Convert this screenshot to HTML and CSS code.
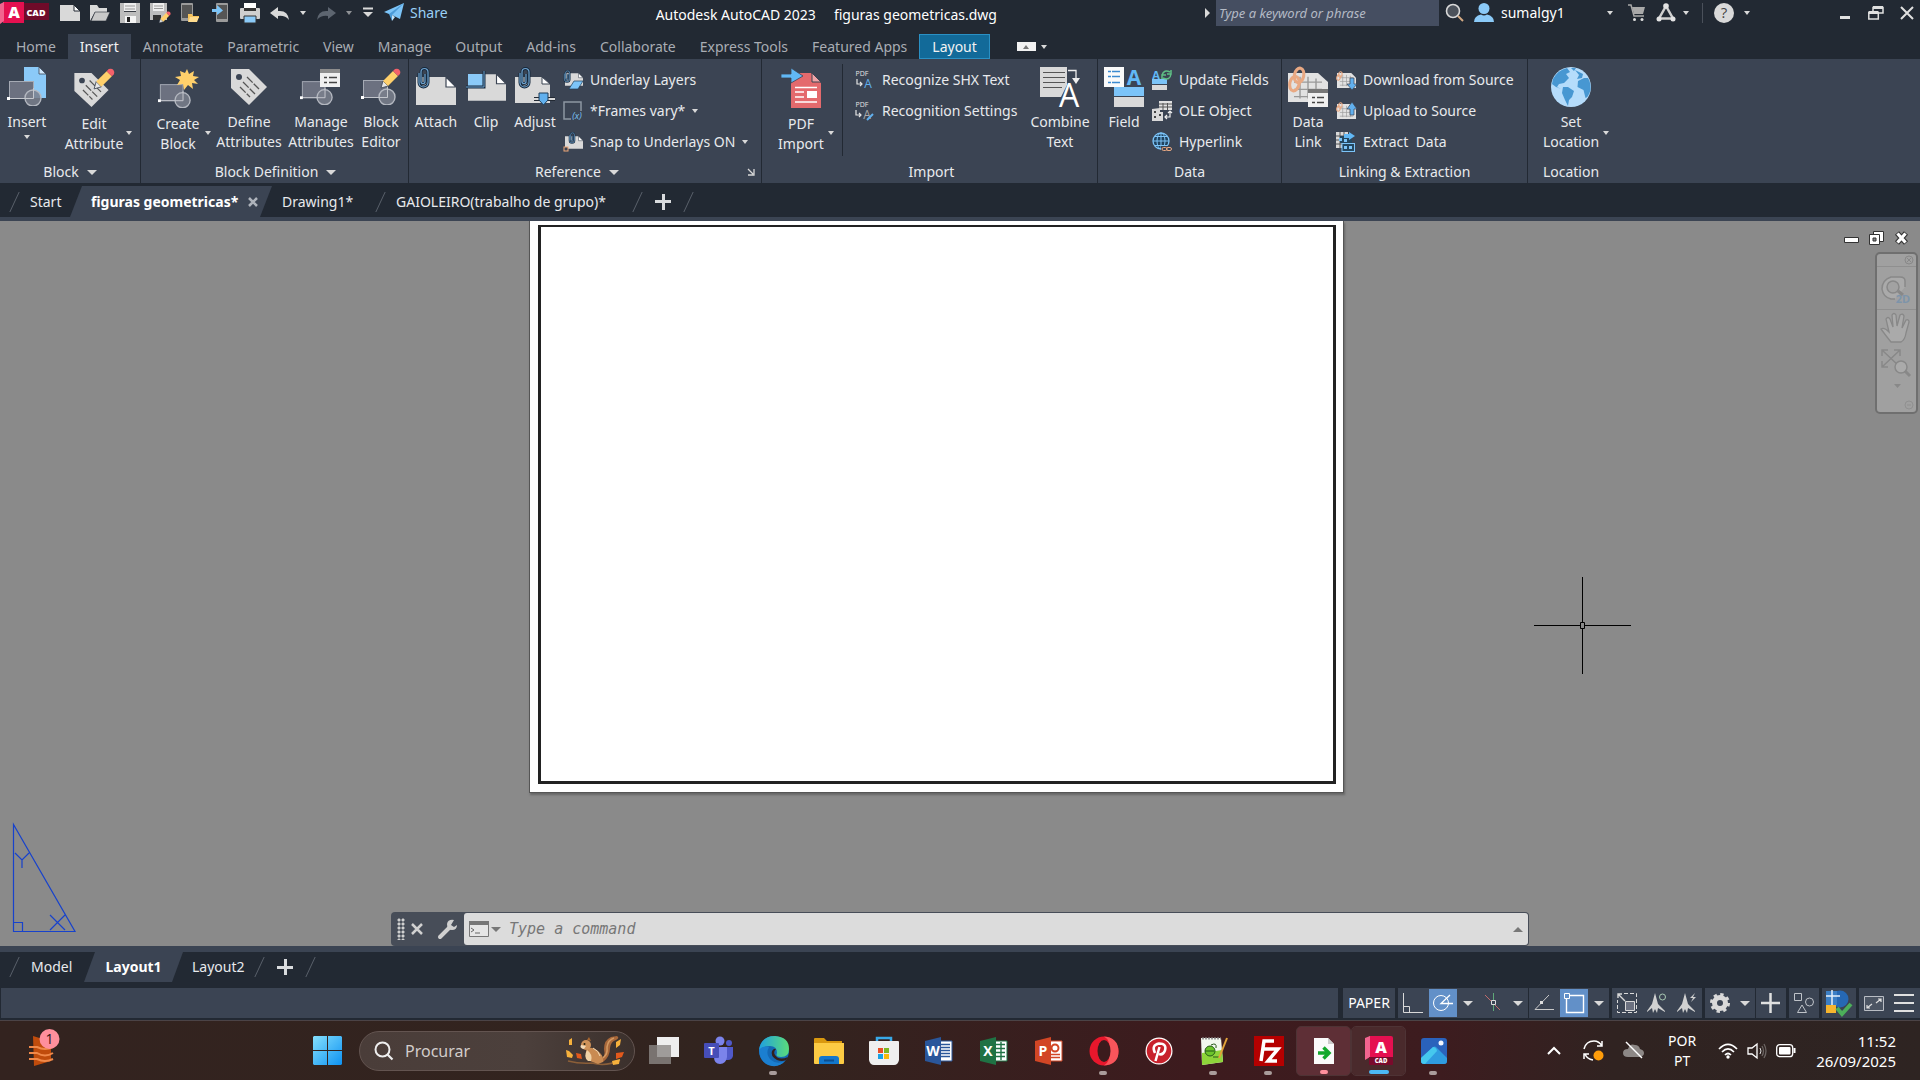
FILE: index.html
```
<!DOCTYPE html>
<html lang="en">
<head>
  <meta charset="UTF-8">
  <title>Autodesk AutoCAD 2023 - figuras geometricas.dwg</title>
  <meta name="viewport" content="width=device-width, initial-scale=1.0">
  <link rel="stylesheet" href="styles.css">
</head>
<body>

  <!-- shared shapes -->
  <svg class="defs" aria-hidden="true">
    <symbol id="clip" viewBox="0 0 12 22">
      <path d="M1.500 6v9.500a4.500 4.500 0 0 0 9 0V5a3.500 3.500 0 0 0-7 0v9.500a2 2 0 0 0 4 0V7" fill="none" stroke="#16293d" stroke-width="3"/>
      <path d="M1.500 6v9.500a4.500 4.500 0 0 0 9 0V5a3.500 3.500 0 0 0-7 0v9.500a2 2 0 0 0 4 0V7" fill="none" stroke="#6fa3cf" stroke-width="1.200"/>
    </symbol>
    <symbol id="block" viewBox="0 0 36 26">
      <rect x="2.500" y="1.500" width="24" height="17" fill="#6c7180" stroke="#a5aab4"/>
      <circle cx="26" cy="18" r="8" fill="#7a7f8c" fill-opacity=".85" stroke="#b4b8c0" stroke-width="1.400"/>
      <path d="M2 18.500h24.500V8" fill="none" stroke="#c3c6cc"/>
      <rect x="0" y="17" width="3" height="3" fill="#fff"/>
    </symbol>
    <symbol id="pencil" viewBox="0 0 22 22">
      <path d="M2 20l2-7 5 5z" fill="#e6e6e6" stroke="#3b4453" stroke-width=".8"/>
      <path d="M4 13L14 3l5 5L9 18z" fill="#ffd06b"/>
      <path d="M14 3l2-2q3-1 4.500 1T21 6l-2 2z" fill="#f4616a"/>
    </symbol>
    <symbol id="tag" viewBox="0 0 38 40">
      <path d="M1 2h18l18 18-18 18L1 21z" fill="#d9d9d9"/>
      <circle cx="9" cy="10" r="3" fill="#3b4453"/>
      <path d="M17 10l12 12M13 15l12 12M10 20l10 10" stroke="#555" stroke-width="1.300" stroke-dasharray="8 1.500"/>
    </symbol>
    <symbol id="sheet" viewBox="0 0 20 14">
      <path d="M0 0h15l5 5v9H0z" fill="#d9d9d9"/>
      <path d="M15 0v5h5z" fill="#fff" stroke="#3b4453" stroke-width=".6"/>
    </symbol>
    <symbol id="chain" viewBox="0 0 18 26">
      <g fill="none" stroke="#e9a983" stroke-width="3">
        <ellipse cx="11" cy="9" rx="4.500" ry="7" transform="rotate(12 11 9)"/>
        <ellipse cx="6.500" cy="17" rx="4.500" ry="7" transform="rotate(12 6.500 17)"/>
      </g>
    </symbol>
    <symbol id="grid" viewBox="0 0 20 16" preserveAspectRatio="none">
      <path d="M0 0h15l5 5v11H0z" fill="#e2e2e2"/>
      <path d="M3 5h14M3 9h14M3 13h14M6 2v12M10 2v12M14 3v11" stroke="#999" stroke-width=".7"/>
    </symbol>
  </svg>

  <header class="titlebar">
    <div class="quick">
      <button class="logo" aria-label="Application menu">
        <svg width="50" height="26" viewBox="0 0 50 26"><path d="M24 3h25v17H24z" fill="#6f0b29"/><path d="M3 2h21v21H3z" fill="#e51050"/><path d="M0 4l4-2v19l-4 3z" fill="#f2648f"/><text x="14" y="18" class="t-logo">A</text><text x="36" y="16" class="t-cad">CAD</text></svg>
      </button>
      <button aria-label="New"><svg width="20" height="20"><path d="M0 2h14l6 6v10H0z" fill="#d9d9d9"/><path d="M14 2l6 6h-6z" fill="#fff" stroke="#222933"/></svg></button>
      <button aria-label="Open"><svg width="20" height="20"><path d="M0 18V2h7l2 3h8v4H5z" fill="#d9d9d9"/><path d="M5 9h15l-4 9H1z" fill="#c9c9c9" stroke="#222933" stroke-width=".6"/></svg></button>
      <button aria-label="Save"><svg width="20" height="20"><path d="M0 0h20v20H0z" fill="#bdbdbd"/><path d="M4 0h12v9H4z" fill="#3b3f46"/><path d="M4 0h12v8H4z" fill="#eee"/><path d="M5 3h10M5 6h10" stroke="#999"/><path d="M5 13h11v7H5z" fill="#f4f4f4"/><path d="M7 14h3v5H7z" fill="#222"/></svg></button>
      <button aria-label="Save as"><svg width="20" height="20"><path d="M0 0h17v17H0z" fill="#bdbdbd"/><path d="M3 0h11v8H3z" fill="#eee"/><path d="M4 3h9M4 5.500h9" stroke="#999"/><path d="M3 12h8v5H3z" fill="#333"/><use href="#pencil" x="8" y="8" width="13" height="13"/></svg></button>
      <button aria-label="Open from mobile"><svg width="20" height="20"><rect x="1" width="12" height="18" rx="1" fill="#9b9b9b"/><path d="M2 2h10v13H2z" fill="#555"/><path d="M8 11h4l1 2h6v2h-9l-2 4z" fill="#f6c35c"/><path d="M10 14h9l-2 5H8z" fill="#ffdc8e"/></svg></button>
      <button aria-label="Save to mobile"><svg width="20" height="20"><rect x="6" width="12" height="19" rx="1" fill="#9b9b9b"/><path d="M7 2h10v14H7z" fill="#555"/><path d="M2 6h5V2l6 5.500L7 12V9H2z" fill="#7cc4f8"/></svg></button>
      <button aria-label="Plot"><svg width="20" height="20"><path d="M4 0h12v6H4z" fill="#fff"/><rect y="5" width="20" height="11" rx="1" fill="#cfcfcf"/><path d="M4 5h12v3H4z" fill="#333"/><path d="M4 13h12v7H4z" fill="#8bcaf8" stroke="#333"/></svg></button>
      <button aria-label="Undo"><svg width="20" height="20"><path d="M0 10l8-6v4q10-1 11 9-4-5-11-4v3z" fill="#d9d9d9"/></svg></button>
      <button class="drop" aria-label="Undo list"><i class="caret"></i></button>
      <button aria-label="Redo"><svg width="20" height="20"><path d="M20 10l-8-6v4q-10-1-11 9 4-5 11-4v3z" fill="#5d6570"/></svg></button>
      <button class="drop dim" aria-label="Redo list"><i class="caret"></i></button>
      <button aria-label="Customize"><svg width="12" height="12"><path d="M1 1.500h10" stroke="#d9d9d9" stroke-width="2"/><path d="M1 5h10l-5 5z" fill="#d9d9d9"/></svg></button>
      <button class="share"><svg width="20" height="20"><path d="M0 9L20 0l-4 16-6-3z" fill="#7cc4f8"/><path d="M5 11L20 0 8 12v6z" fill="#4b9bd8"/><path d="M8 18l3-4-3-2z" fill="#c5e5fb"/></svg>Share</button>
    </div>
    <h1><span>Autodesk AutoCAD 2023</span><span>figuras geometricas.dwg</span></h1>
    <div class="info">
      <i class="caret-right"></i>
      <input type="text" class="keyword" placeholder="Type a keyword or phrase" aria-label="Search help">
      <button class="find" aria-label="Search"><svg width="20" height="20"><circle cx="8" cy="8" r="6.500" fill="#4c525b" stroke="#d9d9d9" stroke-width="1.600"/><path d="M13 13l5 5" stroke="#d3a983" stroke-width="2"/></svg></button>
      <button class="user"><svg width="20" height="20"><circle cx="10" cy="5.500" r="5.500" fill="#8bcaf8"/><path d="M0 19q0-6 7-7.500 3 2 6 0 7 1.500 7 7.500z" fill="#8bcaf8"/></svg>sumalgy1 <i class="caret"></i></button>
      <button class="cart" aria-label="Store"><svg width="18" height="18"><path d="M0 1h3l3 11h10" fill="none" stroke="#a9a9a9" stroke-width="1.500"/><path d="M4 3h13l-2 7H6z" fill="#a9a9a9"/><circle cx="6.500" cy="15.500" r="1.500" fill="#ddd"/><circle cx="14" cy="15.500" r="1.500" fill="#ddd"/></svg></button>
      <button class="apps" aria-label="Autodesk apps"><svg width="20" height="20"><path d="M10 3L3 15.500h14z" fill="none" stroke="#d0d0d0" stroke-width="2.500"/><circle cx="10" cy="3" r="2.800" fill="#e3e3e3"/><circle cx="3" cy="16" r="2.500" fill="#e3e3e3"/><circle cx="17" cy="16" r="2.500" fill="#e3e3e3"/></svg><i class="caret"></i></button>
      <button class="help" aria-label="Help"><svg width="20" height="20"><circle cx="10" cy="10" r="10" fill="#d9d9d9"/><text x="10" y="15" class="t-help">?</text></svg><i class="caret"></i></button>
    </div>
    <div class="window">
      <button aria-label="Minimize"><svg width="16" height="16"><path d="M3 12.500h10" stroke="#e0e0e0" stroke-width="3"/></svg></button>
      <button aria-label="Restore"><svg width="16" height="16"><path d="M5 7V2.500h10V8h-4" fill="none" stroke="#e0e0e0" stroke-width="1.500"/><path d="M5 2.500h10M.5 7.500h10" stroke="#e0e0e0" stroke-width="3"/><path d="M.8 7v7h9.500V7" fill="none" stroke="#e0e0e0" stroke-width="1.500"/></svg></button>
      <button aria-label="Close"><svg width="16" height="16"><path d="M2 2l12 12M14 2L2 14" stroke="#e0e0e0" stroke-width="2"/></svg></button>
    </div>
  </header>

  <nav class="tabs">
    <button>Home</button>
    <button class="active">Insert</button>
    <button>Annotate</button>
    <button>Parametric</button>
    <button>View</button>
    <button>Manage</button>
    <button>Output</button>
    <button>Add-ins</button>
    <button>Collaborate</button>
    <button>Express Tools</button>
    <button>Featured Apps</button>
    <button class="context">Layout</button>
    <button class="fold" aria-label="Minimize ribbon"><span><i class="caret-up"></i></span><i class="caret"></i></button>
  </nav>

  <section class="ribbon">
    <div class="panel p-block">
      <div class="tools">
        <button class="big"><svg width="40" height="40"><path d="M17 0h15l7 7v24H17z" fill="#8bcaf8"/><path d="M32 0v7h7z" fill="#cfe8fc" stroke="#3b4453" stroke-width=".8"/><use href="#block" x="0" y="13" width="36" height="26"/></svg><span>Insert</span><i class="caret"></i></button>
        <button class="big low w80"><svg width="42" height="40"><use href="#tag" x="0" y="3" width="37" height="38"/><use href="#pencil" x="19" y="0" width="23" height="23"/></svg><span>Edit<br>Attribute</span><i class="caret side"></i></button>
      </div>
      <h2>Block <i class="caret wide"></i></h2>
    </div>
    <div class="panel p-def">
      <div class="tools">
        <button class="big low w70"><svg width="40" height="40"><use href="#block" x="0" y="15" width="34" height="25"/><path d="M30 1l2 5 5-3-1 5 6 1-5 3 4 4-6-1 1 6-5-4-4 5-1-6-6 1 3-5-5-3 6-1-1-5 5 2z" fill="#ffd06b" transform="translate(-1)"/></svg><span>Create<br>Block</span><i class="caret side"></i></button>
        <button class="big w72"><svg width="40" height="40"><use href="#tag" x="1" y="0" width="38" height="40"/></svg><span>Define<br>Attributes</span></button>
        <button class="big w72"><svg width="42" height="40"><use href="#block" x="0" y="13" width="34" height="25"/><path d="M20 2h20v18H20z" fill="#f0f0f0"/><path d="M20 2h20v4H20z" fill="#8d8d8d"/><path d="M24 10.500h3M24 15.500h3M29 10.500h8M29 15.500h8" stroke="#444" stroke-width="1.500"/></svg><span>Manage<br>Attributes</span></button>
        <button class="big w48"><svg width="40" height="40"><use href="#block" x="0" y="12" width="36" height="26"/><use href="#pencil" x="18" y="1" width="22" height="22"/></svg><span>Block<br>Editor</span></button>
      </div>
      <h2>Block Definition <i class="caret wide"></i></h2>
    </div>
    <div class="panel p-ref">
      <div class="tools">
        <button class="big"><svg width="40" height="40"><use href="#sheet" x="0" y="10" width="40" height="28"/><use href="#clip" x="1" y="0" width="13" height="22"/></svg><span>Attach</span></button>
        <button class="big w46"><svg width="40" height="40"><use href="#sheet" x="2" y="6" width="38" height="29"/><path d="M2 7h15v12H2z" fill="#8bcaf8"/><path d="M0 20h18V4" fill="none" stroke="#16293d" stroke-width="3"/><path d="M0 20h18V4" fill="none" stroke="#6fa3cf"/></svg><span>Clip</span></button>
        <button class="big w52"><svg width="40" height="40"><path d="M0 10h27l8 7v19H0z" fill="#d9d9d9"/><path d="M27 10v7h8z" fill="#fff" stroke="#3b4453"/><use href="#clip" x="3" y="0" width="13" height="22"/><path d="M19 32h21" stroke="#222933" stroke-width="4"/><path d="M19 32h21" stroke="#d9d9d9" stroke-width="2"/><path d="M24 26h9v7l-4.500 5-4.500-5z" fill="#61b0ee" stroke="#1f3d58"/></svg><span>Adjust</span></button>
        <div class="rows">
          <button><svg width="20" height="20"><use href="#sheet" x="2" y="3" width="18" height="13"/><use href="#clip" x="0" y="0" width="8" height="13"/><path d="M6 19l5-8h9l-5 8z" fill="#7cc4f8" stroke="#1f3d58" stroke-width=".7"/></svg>Underlay Layers</button>
          <button><svg width="20" height="20"><path d="M18 10V1H1v17h7" fill="none" stroke="#8d96a3" stroke-width="1.500"/><text x="14" y="18" class="t-var">(x)</text></svg>*Frames vary* <i class="caret"></i></button>
          <button><svg width="20" height="20"><use href="#sheet" x="2" y="4" width="18" height="13"/><use href="#clip" x="5" y="0" width="8" height="12"/><rect x="1" y="15" width="4" height="4" fill="#3b4453" stroke="#f0a878"/></svg>Snap to Underlays ON <i class="caret"></i></button>
        </div>
      </div>
      <h2>Reference <i class="caret wide"></i><svg class="launcher" width="8" height="8"><path d="M1 1l5 5M7 1v6H1" fill="none" stroke="#d9d9d9" stroke-width="1.300"/></svg></h2>
    </div>
    <div class="panel p-import">
      <div class="tools">
        <button class="big low w70"><svg width="40" height="40"><path d="M10 5h20l10 10v25H10z" fill="#e46a6d"/><path d="M31 5v9h9z" fill="#f0a5a7" stroke="#3b4453"/><path d="M14 19.500h22M14 24h9M14 29h9M14 34h22" stroke="#fff" stroke-width="1.300"/><path d="M26 23h10v7H26z" fill="#fff"/><path d="M0 6h10V0l12 8-12 7v-5H0z" fill="#61b8f5" stroke="#3b4453" stroke-width=".8"/></svg><span>PDF<br>Import</span><i class="caret side"></i></button>
        <i class="divider"></i>
        <div class="rows r-import">
          <button><svg width="20" height="20"><text x="7" y="6" class="t-pdf">PDF</text><path d="M2 9v5h5M5 12l2 2-2 2" fill="none" stroke="#e5e5e5" stroke-width="1.200"/><text x="13" y="18" class="t-a">A</text></svg>Recognize SHX Text</button>
          <button><svg width="20" height="20"><text x="7" y="6" class="t-pdf">PDF</text><path d="M1 9v5h5M4 12l2 2-2 2" fill="none" stroke="#e5e5e5" stroke-width="1.200"/><text x="12" y="18" class="t-a gray">A</text><path d="M12 19l6-6" stroke="#61b0ee" stroke-width="2"/></svg>Recognition Settings</button>
        </div>
        <button class="big w70"><svg width="40" height="40"><path d="M0 0h27v18l-6 12H0z" fill="#d9d9d9"/><path d="M3 5.500h22M3 10.500h22M3 15.500h22M3 20.500h19" stroke="#555"/><path d="M28 3.500h8V12" stroke="#eee" fill="none" stroke-width="1.300"/><path d="M32 11h8l-4 6z" fill="#eee"/><text x="29" y="40" class="t-bigA">A</text></svg><span>Combine<br>Text</span></button>
      </div>
      <h2>Import</h2>
    </div>
    <div class="panel p-data">
      <div class="tools">
        <button class="big w52"><svg width="40" height="40"><path d="M0 0h20v20H0z" fill="#fafafa"/><path d="M4 4.500h3M4 9.500h3M4 15.500h3M8 4.500h8M8 9.500h8M8 15.500h8" stroke="#3b8ad0" stroke-width="1.500"/><text x="30" y="18" class="t-field">A</text><path d="M10 20h30v9H10z" fill="#7cc4f8"/><path d="M0 0h20v20H0z" fill="none"/><path d="M10 30h30v10H10z" fill="#d9d9d9"/></svg><span>Field</span></button>
        <div class="rows">
          <button><svg width="20" height="20"><text x="4" y="9" class="t-upd">A</text><path d="M0 9h15v5H0z" fill="#7cc4f8"/><path d="M0 15h15v5H0z" fill="#d9d9d9"/><path d="M10 5q2-6 8-3M19 4q-1 7-8 4M19 0v4h-4M10 9V5h4" fill="none" stroke="#5fbe85" stroke-width="1.500"/></svg>Update Fields</button>
          <button><svg width="20" height="20"><path d="M7 0h13v9H7z" fill="#e0e0e0"/><path d="M7 3h13M7 6h13M11 2v7M15.500 2v7" stroke="#555"/><path d="M0 8l8-1v13H0z" fill="#d9d9d9"/><path d="M6 11h5v9H6z" fill="#d9d9d9"/><path d="M2 10h2v2H2zM2 15h2v2H2zM7 13h2v2H7z" fill="#444"/><path d="M13 16h5v-6M15 14l-2 2 2 2M16 12l2-2 2 2" fill="none" stroke="#eee" stroke-width="1.200"/></svg>OLE Object</button>
          <button><svg width="20" height="20"><circle cx="9" cy="9" r="8" fill="#20435f" stroke="#7cc4f8" stroke-width="1.300"/><path d="M1 9h16M3 4.500h12M3 13.500h12M9 1v16" stroke="#7cc4f8"/><ellipse cx="9" cy="9" rx="4" ry="8" fill="none" stroke="#7cc4f8"/><path d="M9 14h11v6H9z" fill="#3b4453"/><rect x="10" y="15.500" width="5" height="3" rx="1.500" fill="none" stroke="#e9a983"/><rect x="14.500" y="15.500" width="5" height="3" rx="1.500" fill="none" stroke="#e9a983"/></svg>Hyperlink</button>
        </div>
      </div>
      <h2>Data</h2>
    </div>
    <div class="panel p-link">
      <div class="tools">
        <button class="big w52"><svg width="40" height="40"><use href="#grid" x="0" y="6" width="40" height="29"/><use href="#chain" x="-1" y="-1" width="20" height="27"/><path d="M20 22h20v18H20z" fill="#f0f0f0"/><path d="M20 22h20v4H20z" fill="#777"/><path d="M24 30.500h3M24 35.500h3M29 30.500h7M29 35.500h7" stroke="#444" stroke-width="1.300"/></svg><span>Data<br>Link</span></button>
        <div class="rows">
          <button><svg width="20" height="20"><use href="#grid" x="1" y="3" width="19" height="15"/><use href="#chain" x="0" y="0" width="7" height="12"/><path d="M14 8h4v6h3l-5 6-5-6h3z" fill="#61b0ee" stroke="#3b4453" stroke-width=".7"/></svg>Download from Source</button>
          <button><svg width="20" height="20"><use href="#grid" x="1" y="3" width="19" height="15"/><use href="#chain" x="0" y="0" width="7" height="12"/><path d="M14 14h4V8h3l-5-7-5 7h3z" fill="#61b0ee" stroke="#3b4453" stroke-width=".7"/></svg>Upload to Source</button>
          <button><svg width="20" height="20"><path d="M0 0h12v16H0z" fill="#d9d9d9"/><path d="M0 4h12M0 8h12M0 12h12M4 0v16M8 0v16" stroke="#555"/><path d="M4 4h12v7H4z" fill="#24475f"/><path d="M8 2h5V0l6 4-6 4V6H8z" fill="#61b8f5"/><path d="M3 6h3v3H3zM8 7h3v3H8z" fill="#7cc4f8"/><rect x="6" y="11.500" width="12.500" height="8" fill="#24475f" stroke="#7cc4f8"/><path d="M8 14h3v3H8zM13 14h3v3h-3z" fill="#7cc4f8"/></svg>Extract&nbsp; Data</button>
        </div>
      </div>
      <h2>Linking &amp; Extraction</h2>
    </div>
    <div class="panel p-loc">
      <div class="tools">
        <button class="big w80"><svg width="40" height="40"><circle cx="20" cy="20" r="20" fill="#b5dcfb"/><path d="M2 12q5-9 14-11l3 4-4 2 3 4-5 5-5 1-2 3 4 2-5-2-4-3zM12 20l5 0 6 4-2 6-3 3-1 6-3-6-3-7zM27 14l6-3 4 0q3 5 2.500 12-2 7-5 8l-2-8-6-3zM24 3l8 4-1 4-5 1 2-4zM20 1h5l-2 3z" fill="#4797d2"/></svg><span>Set<br>Location</span><i class="caret side"></i></button>
      </div>
      <h2>Location</h2>
    </div>
  </section>

  <nav class="files">
    <i class="slash"></i>
    <button class="f-start">Start</button>
    <div class="current"><button>figuras geometricas*</button><button aria-label="Close drawing"><svg width="10" height="10"><path d="M1 1l8 8M9 1L1 9" stroke="#aeb3bb" stroke-width="2.500"/></svg></button></div>
    <button class="f-draw">Drawing1*</button>
    <i class="slash"></i>
    <button class="f-gaio">GAIOLEIRO(trabalho de grupo)*</button>
    <i class="slash"></i>
    <button class="plus" aria-label="New drawing"></button>
    <i class="slash"></i>
  </nav>

  <main class="canvas">
    <div class="paper"><div class="viewport"></div></div>

    <div class="mdi">
      <button aria-label="Minimize drawing"><svg width="16" height="14"><path d="M.5 6.500h14v5H.5z" fill="#fff" stroke="#333"/></svg></button>
      <button aria-label="Restore drawing"><svg width="16" height="14"><path d="M4.500.5h10v10h-10z" fill="#fff" stroke="#333"/><path d="M.5 3.500h10v10H.5z" fill="#fff" stroke="#333"/><path d="M4 7h3v3H4z" fill="#888" stroke="#333"/></svg></button>
      <button aria-label="Close drawing window"><svg width="16" height="14"><path d="M3 2l9 10M12 2L3 12" stroke="#333" stroke-width="5.500"/><path d="M3.500 2.500l8 9M11.500 2.500l-8 9" stroke="#fff" stroke-width="3.200"/></svg></button>
    </div>

    <div class="navbar">
      <button aria-label="Close navigation bar"><svg width="42" height="12"><circle cx="33" cy="6" r="4" fill="none" stroke="#888"/><path d="M31 4l4 4M35 4l-4 4" stroke="#888"/></svg></button>
      <button class="wheel" aria-label="Steering wheel"><svg width="42" height="42"><path d="M29 20V14q0-4-5-4h-9q-9 3-9 12 1 8 9 10h4" fill="#aaa" stroke="#888" stroke-width="1.500"/><circle cx="17" cy="20" r="6" fill="#a2a2a2" stroke="#888" stroke-width="1.500"/><path d="M22 24l5 4" stroke="#888" stroke-width="3"/><text x="27" y="36" class="t-2d">2D</text></svg></button>
      <button aria-label="Pan"><svg width="42" height="36"><path d="M15 32q-5-6-10-13 3-2 8 3L10 9q2-3 4 0l3 8-1-12q2-3 4 0l1 11 3-11q3-2 4 1l-2 12 4-8q3-1 3 2l-3 11q-1 7-5 9h-8z" fill="#aaa" stroke="#888" stroke-width="1.300"/></svg></button>
      <button aria-label="Zoom extents"><svg width="42" height="34"><path d="M6 4l18 17M24 4L6 21M6 10V4h6M18 4h6v6M6 15v6h6" fill="none" stroke="#888" stroke-width="1.500"/><circle cx="25" cy="21" r="6" fill="#aaa" stroke="#888" stroke-width="1.500"/><path d="M29 25l5 5" stroke="#888" stroke-width="3"/></svg></button>
      <button aria-label="Zoom options"><svg width="42" height="12"><path d="M18 4h7l-3.500 4z" fill="#888"/></svg></button>
      <button aria-label="Navigation bar options"><svg width="42" height="20"><circle cx="33" cy="13" r="4" fill="none" stroke="#909090"/><path d="M31 13h4" stroke="#909090"/></svg></button>
    </div>

    <svg class="crosshair" width="97" height="97"><path d="M0 48.500h46M51 48.500h46M48.500 0v45M48.500 52v45M46.500 45.500h4v6h-4z" fill="none" stroke="#000"/></svg>

    <svg class="ucs" width="64" height="110"><path d="M.5.500v107h61.500zM.5 98.500h9v9M2 29l7 7 7-7M9 36v8M37 91l15 15M52 91l-15 15" fill="none" stroke="#1742cc" stroke-width="1.200"/></svg>

    <div class="command">
      <i class="grip"></i>
      <button class="c-close" aria-label="Close command line"><svg width="12" height="12"><path d="M1 1l10 10M11 1L1 11" stroke="#d0d0d0" stroke-width="2.500"/></svg></button>
      <button class="c-wrench" aria-label="Customize command line"><svg width="20" height="20"><path d="M2 18l9-9" stroke="#d0d0d0" stroke-width="4" stroke-linecap="round"/><path d="M16 1q-6-1-7 4 0 6 5 6 5 0 5-5l-3 2-3-2z" fill="#d0d0d0"/></svg></button>
      <label class="entry">
        <svg width="20" height="16"><path d="M.5.500h19v15H.5z" fill="#e6e6e6" stroke="#777"/><path d="M0 0h20v4H0z" fill="#777"/><path d="M2 7l3 2-3 2M6 12h5" fill="none" stroke="#666"/></svg>
        <i class="caret wide"></i>
        <input type="text" placeholder="Type a command" aria-label="Command">
        <i class="caret-up"></i>
      </label>
    </div>
  </main>

  <nav class="layouts">
    <i class="slash"></i>
    <button class="l-model">Model</button>
    <button class="l-active">Layout1</button>
    <button class="l-two">Layout2</button>
    <i class="slash"></i>
    <button class="plus" aria-label="New layout"></button>
    <i class="slash"></i>
  </nav>

  <div class="status">
    <div class="cell grow"></div>
    <div class="cell paper-space"><button>PAPER</button></div>
    <div class="cell">
      <button aria-label="Ortho"><svg width="20" height="20"><path d="M.5 0v19.500H20M.5 13.500h6v6" fill="none" stroke="#d9d9d9"/></svg></button>
      <button class="on" aria-label="Polar tracking"><svg width="20" height="20"><circle cx="8" cy="10" r="7.500" fill="none" stroke="#fff"/><path d="M20 10.500H8L17 2" fill="none" stroke="#fff" stroke-width="1.300"/></svg></button>
      <button class="drop" aria-label="Polar options"><i class="caret wide"></i></button>
      <button aria-label="Isometric drafting"><svg width="20" height="20"><path d="M2 2l15 15" stroke="#c06a6a"/><path d="M10.500 0v18" stroke="#5fa878"/><path d="M8.500 7.500h4v4h-4z" fill="#3b4453" stroke="#ddd"/></svg></button>
      <button class="drop" aria-label="Isometric options"><i class="caret wide"></i></button>
    </div>
    <div class="cell tight">
      <button aria-label="Object snap tracking"><svg width="20" height="20"><path d="M15 2L1 16.500h19" fill="none" stroke="#c9c9c9"/><path d="M6 8h3v3H6z" fill="#ddd"/></svg></button>
      <button class="on" aria-label="Object snap"><svg width="20" height="20"><path d="M5 2.500h14.500v17H2.500V5" fill="none" stroke="#fff" stroke-width="1.400"/><path d="M.5.500h5v5h-5z" fill="none" stroke="#fff"/></svg></button>
      <button class="drop" aria-label="Snap options"><i class="caret wide"></i></button>
    </div>
    <div class="cell">
      <button aria-label="Annotation visibility"><svg width="20" height="20"><path d="M7 .5h12.500v19H.5V7" fill="none" stroke="#d9d9d9" stroke-dasharray="4 2"/><path d="M8.500 8.500h9v9h-9z" fill="#6c7180" stroke="#d9d9d9"/><path d="M8 8L1 1M1 5V1h4" stroke="#d9d9d9" stroke-width="1.400" fill="none"/></svg></button>
      <button aria-label="Annotation autoscale"><svg width="20" height="20"><path d="M8 0l3 11 7 7v1l-7-4-1 5-2-4-2 4-1-5-5 4v-1l5-7z" fill="#d0d0d0"/><circle cx="15.500" cy="4" r="3" fill="none" stroke="#a9c9b4"/></svg></button>
      <button aria-label="Annotation scale"><svg width="20" height="20"><path d="M8 0l3 11 7 7v1l-7-4-1 5-2-4-2 4-1-5-5 4v-1l5-7z" fill="#d0d0d0"/><path d="M18 0l-5 5h3l-2 4 5-5h-3z" fill="#d0d0d0"/></svg></button>
    </div>
    <div class="cell">
      <button aria-label="Workspace"><svg width="20" height="20"><circle cx="10" cy="10" r="5.500" fill="none" stroke="#d9d9d9" stroke-width="5"/><circle cx="10" cy="10" r="8.500" fill="none" stroke="#d9d9d9" stroke-width="3" stroke-dasharray="3.300 3.370"/></svg></button>
      <button class="drop" aria-label="Workspace options"><i class="caret wide"></i></button>
    </div>
    <div class="cell tight"><button aria-label="Annotation monitor"><svg width="20" height="20"><path d="M0 10h19M9.500 0v20" stroke="#e0e0e0" stroke-width="2.500"/></svg></button></div>
    <div class="cell"><button aria-label="Isolate objects"><svg width="20" height="20"><path d="M.5.500h7v7h-7zM8 12l4.500 7.500h-9z" fill="none" stroke="#bfc3c9"/><circle cx="15.500" cy="9" r="4" fill="none" stroke="#bfc3c9"/></svg></button></div>
    <div class="cell"><button class="perf" aria-label="Graphics performance"><svg width="26" height="26"><circle cx="14" cy="9" r="8.500" fill="#2668b4"/><path d="M0 1h11v14H0z" fill="#3c7fc5"/><path d="M6 0v15M0 6h14" stroke="#e4f0fa" stroke-width="1.500"/><path d="M0 15h10v8H0z" fill="#f6b52e"/><path d="M11 18l5 6 9-10" fill="none" stroke="#4cae5a" stroke-width="4"/></svg></button></div>
    <div class="cell last">
      <button aria-label="Clean screen"><svg width="20" height="20"><path d="M.5 3.500h19v14H.5z" fill="#4c5563" stroke="#b9bdc4"/><path d="M12 10l5-4M14 6h3v3M8 11l-5 4M3 12v3h3" fill="none" stroke="#e0e0e0" stroke-width="1.200"/></svg></button>
      <button aria-label="Customization"><svg width="20" height="20"><path d="M0 2h20M0 10h20M0 18h20" stroke="#e0e0e0" stroke-width="2.200"/></svg></button>
    </div>
  </div>

  <footer class="taskbar">
    <button class="widget" aria-label="Widgets"><svg width="34" height="38"><path d="M5 7q9 3 18 5v20L6 37z" fill="#c04c0c"/><path d="M1 18h8q8 4 16 0M1 24h8q8 5 16 0M1 30h8q8 4 16 0" fill="none" stroke="#f0894a" stroke-width="2"/><circle cx="21.500" cy="10" r="10" fill="#ff8f9c"/><text x="21.500" y="15" class="t-badge">1</text></svg></button>
    <div class="apps-row">
      <button aria-label="Start"><svg width="30" height="30"><defs><linearGradient id="win" x2="1" y2="1"><stop stop-color="#85e0fd"/><stop offset="1" stop-color="#0e92f2"/></linearGradient></defs><path d="M1 0h13v14H0V1zM15 0h13l1 1v13H15zM0 15h14v14H1l-1-1zM15 15h14v13l-1 1H15z" fill="url(#win)"/></svg></button>
      <label class="search">
        <svg width="20" height="20"><circle cx="8.500" cy="8.500" r="7" fill="none" stroke="#eee" stroke-width="2"/><path d="M13.500 13.500l5 5" stroke="#eee" stroke-width="2.200"/></svg>
        <input type="text" placeholder="Procurar" aria-label="Procurar">
        <svg width="62" height="32"><path d="M4 26q12 3 24 2 14 4 28-3" fill="none" stroke="#8c5f38" stroke-width="1.500"/><path d="M36 25q6-3 4-11 0-9 7-12l6-1q3 2-1 4-5 1-6 8 0 9-7 14z" fill="#a9683a"/><path d="M39 23q5-4 4-11 1-7 7-9" fill="none" stroke="#d49a63" stroke-width="1.500"/><path d="M23 13q8-1 13 5 4 4 3 9l-5 2-8-3q-6-6-3-13z" fill="#c98b52"/><path d="M23 15q6 4 4 11h-3q-5-4-1-11z" fill="#efd2a6"/><circle cx="22" cy="10" r="5" fill="#cf9259"/><path d="M17 10q-2 3 3 4l2-3z" fill="#f2dab8"/><path d="M23 5l2-3 2 4z" fill="#a8662f"/><circle cx="20.500" cy="9" r="1" fill="#221"/><path d="M29 13q6 3 7 8" stroke="#f1dcb9" fill="none"/><path d="M5 5l3-2v7H5zM2 15l3 1 4 4-1 3-5-1zM52 7l5-3-1 6-4 3z" fill="#f6b13c"/><path d="M12 18l5 1 1 5-5-1zM52 18l8-1-2 5-6 2z" fill="#e2591c"/><path d="M48 26l8-2-1 5-6 1z" fill="#f6b13c"/></svg>
      </label>
      <button aria-label="Task view"><svg width="30" height="30"><path d="M8 1h22v20H8z" fill="#eee"/><path d="M0 9h22v19H0z" fill="#8b8785" fill-opacity=".8"/></svg></button>
      <button aria-label="Teams"><svg width="30" height="30"><circle cx="16" cy="5" r="4.500" fill="#7b83eb"/><circle cx="25" cy="7" r="3" fill="#5059c9"/><path d="M20 11h9v9q-1 4-5 4h-4z" fill="#5059c9"/><path d="M10 11h13v10q-1 7-7 7t-6-7z" fill="#7b83eb"/><rect y="7" width="15" height="15" rx="1" fill="#464eb8"/><text x="7.500" y="19" class="t-teams">T</text></svg></button>
      <button class="run" aria-label="Edge"><svg width="30" height="30"><defs><linearGradient id="edge" x2="1"><stop stop-color="#1fa0e0"/><stop offset="1" stop-color="#5bdc7a"/></linearGradient></defs><circle cx="15" cy="15" r="15" fill="#1468b4"/><path d="M0 14Q2 0 16 0q14 1 14 13 0 8-8 8-6 0-4-4 0-7-7-7-7 0-11 4z" fill="url(#edge)"/><path d="M10 11q-4 7 2 13 6 5 14 1-5 6-13 5Q1 28 0 14q4-5 10-3z" fill="#1b7fd0"/><path d="M17 13q-3 3-1 6 4 6 13 2l-2 3q-4 2-9 0-7-4-5-9 2-3 4-2z" fill="#331f1d"/></svg></button>
      <button aria-label="File explorer"><svg width="30" height="30"><path d="M0 3q0-1 1-1h9l3 3h15v6H0z" fill="#d9980f"/><path d="M0 7h30v20q0 1-1 1H1q-1 0-1-1z" fill="#fccb44"/><path d="M5 28v-5q0-3 3-3h14q3 0 3 3v5z" fill="#1377cc"/><path d="M10 24.500h10" stroke="#0c4f91" stroke-width="2"/></svg></button>
      <button aria-label="Microsoft Store"><svg width="30" height="30"><path d="M8 7V2h14v5" fill="none" stroke="#38a9e8" stroke-width="2.500"/><path d="M0 6q0-1 1-1h28q1 0 1 1v18q-1 5-5 5H5q-4 0-5-5z" fill="#efefef"/><path d="M9 12h5v5H9z" fill="#e84f27"/><path d="M15 12h5v5h-5z" fill="#7cb722"/><path d="M9 18h5v5H9z" fill="#18a2e4"/><path d="M15 18h5v5h-5z" fill="#f8b90c"/></svg></button>
      <button aria-label="Word"><svg width="28" height="28"><path d="M13 4h14v20H13z" fill="#fff" stroke="#2a569a"/><path d="M16 7.500h9M16 10.500h9M16 13.500h9M16 16.500h9M16 19.500h9" stroke="#2a569a" stroke-width="1.400"/><path d="M0 4l16-4v28L0 24z" fill="#2a569a"/><text x="8" y="19" class="t-office">W</text></svg></button>
      <button aria-label="Excel"><svg width="28" height="28"><path d="M13 4h14v20H13z" fill="#fff" stroke="#1f7244"/><path d="M16 7.500h9M16 11.500h9M16 15.500h9M16 19.500h9M21 5v18" stroke="#1f7244" stroke-width="1.400"/><path d="M0 4l16-4v28L0 24z" fill="#1f7244"/><text x="8" y="19" class="t-office">X</text></svg></button>
      <button aria-label="PowerPoint"><svg width="28" height="28"><path d="M13 4h14v20H13z" fill="#fff" stroke="#d24625"/><circle cx="20" cy="11" r="3.500" fill="none" stroke="#d24625" stroke-width="2"/><path d="M16 17.500h9M16 20.500h9" stroke="#d24625" stroke-width="1.400"/><path d="M0 4l16-4v28L0 24z" fill="#d24625"/><text x="8" y="19" class="t-office">P</text></svg></button>
      <button class="run" aria-label="Opera"><svg width="30" height="30"><ellipse cx="15" cy="15" rx="14.500" ry="14.500" fill="#e8172c"/><path d="M15 .5q14 1 14.500 14.500T15 29.500q6-3 6-14.500T15 .5z" fill="#f8555b"/><ellipse cx="15" cy="15" rx="6.500" ry="11" fill="#3b1b1d"/></svg></button>
      <button aria-label="Pinterest"><svg width="28" height="28"><circle cx="14" cy="14" r="13.500" fill="#fff"/><circle cx="14" cy="14" r="12.300" fill="#c8222c"/><path d="M10.500 24l4-14M10 16q-4-8 4-9.500 8 0 6 7-2 5-6 3.500" fill="none" stroke="#fff" stroke-width="2.500"/></svg></button>
      <button class="run" aria-label="Notepad++"><svg width="30" height="30"><path d="M2 2h20l2 24-21 3z" fill="#f3f8ee"/><path d="M3 17l20-3 1 12-21 3z" fill="#8ed43a"/><path d="M3 2.500h19" stroke="#999" stroke-width="2" stroke-dasharray="2 1"/><circle cx="11" cy="15" r="5" fill="#6cc52b" stroke="#27581a"/><path d="M6 15h9M12 9q6-3 5 3M14 21h6" stroke="#27581a" fill="none"/><path d="M20 22L28 2" stroke="#e2a33a" stroke-width="2"/></svg></button>
      <button class="run" aria-label="FileZilla"><svg width="30" height="30"><path d="M0 0h30v30H0z" fill="#b50000"/><path d="M7 25L10 5h10M9 13h8M15 13h9L14 25h9" fill="none" stroke="#fff" stroke-width="3.500"/></svg></button>
      <button class="run group pink" aria-label="Transfer"><svg width="20" height="26"><path d="M0 0h14l6 6v20H0z" fill="#fafafa"/><path d="M14 0v6h6z" fill="#ccc"/><path d="M4 15h10M9.500 9.500L15 15l-5.500 5.500" fill="none" stroke="#14a82c" stroke-width="3.500"/></svg></button>
      <button class="run group now" aria-label="AutoCAD"><svg width="28" height="30"><path d="M4 0h22q2 0 2 2v19H4z" fill="#e51050"/><path d="M0 2l5-2v21l-5 3z" fill="#f2648f"/><path d="M4 21h24v7q0 1-1 1H5q-1 0-1-1z" fill="#7a0a2c"/><text x="16" y="17" class="t-logo">A</text><text x="16" y="27" class="t-cad2">CAD</text></svg></button>
      <button class="run" aria-label="Photos"><svg width="26" height="26"><rect width="26" height="26" rx="3" fill="#2a62bc"/><path d="M0 20L12 9q2-1 3 0l11 11v3q0 3-3 3H3q-3 0-3-3z" fill="#2f9ce0"/><path d="M0 20l12-11q3 0 4 4L4 26q-4 0-4-3z" fill="#45c8ee"/><circle cx="20" cy="5" r="2.500" fill="#f2f5ff"/></svg></button>
    </div>
    <div class="tray">
      <button aria-label="Hidden icons"><svg width="14" height="10"><path d="M1 8l6-6 6 6" fill="none" stroke="#fff" stroke-width="2"/></svg></button>
      <button class="sync" aria-label="Update"><svg width="22" height="22"><path d="M1 9q2-8 10-8 5 0 8 5M19 1v5h-5M1 19v-5h5M2 14q2 5 8 6" fill="none" stroke="#fff" stroke-width="1.500"/><circle cx="15.500" cy="15.500" r="5" fill="#ff9d0a"/></svg></button>
      <button aria-label="OneDrive"><svg width="22" height="18"><path d="M5 15q-5 0-5-4t5-4q2-6 7-4 4 0 5 4 4 1 4 4t-4 4z" fill="#8d8886"/><path d="M3 0l16 16" stroke="#fff" stroke-width="1.500"/></svg></button>
      <button class="lang">POR<br>PT</button>
      <button class="net" aria-label="Network, volume and battery">
        <svg width="20" height="16"><path d="M1 6q9-9 18 0M4 9q6-6 12 0M7 12q3-3 6 0" fill="none" stroke="#fff" stroke-width="1.700"/><circle cx="10" cy="14" r="1.700" fill="#fff"/></svg>
        <svg width="20" height="18"><path d="M1 6h4l5-4v14l-5-4H1z" fill="none" stroke="#fff" stroke-width="1.300"/><path d="M13 6q2 3 0 6" stroke="#ddd" fill="none"/><path d="M15 4q3 5 0 10M17 2q4 7 0 14" stroke="#6b6462" fill="none" stroke-width="1.300"/></svg>
        <svg width="20" height="14"><rect x=".7" y=".7" width="16" height="12" rx="3" fill="none" stroke="#fff" stroke-width="1.300"/><rect x="3" y="3" width="11.500" height="7.500" rx="1" fill="#fff"/><path d="M18.500 4v5" stroke="#fff" stroke-width="2"/></svg>
      </button>
      <button class="clock">11:52<br>26/09/2025</button>
    </div>
  </footer>

</body>
</html>
```
FILE: styles.css
```
html, body {
  margin: 0; padding: 0;
  height: 100%;
}
body {
  display: flex;
  flex-direction: column;
  min-height: 100vh;
  overflow: hidden;
  background: #222933;
  color: #e8eaed;
  font-family: "Noto Sans", "Open Sans", sans-serif;
  font-size: 14px;
  line-height: 20px;
}
* { box-sizing: border-box; }
button {
  display: flex;
  align-items: center;
  flex: none;
  margin: 0; padding: 0;
  background: none;
  border: none;
  color: inherit;
  font: inherit;
  white-space: nowrap;
}
input {
  border: none;
  outline: none;
  padding: 0;
  min-width: 0;
  background: none;
  font: inherit;
  color: inherit;
}
svg { display: block; flex: none; overflow: visible; }
.defs { position: absolute; width: 0; height: 0; }

/* triangles */
.caret, .caret-up, .caret-right {
  display: inline-block;
  flex: none;
  border: 3px solid transparent;
}
.caret { border-top: 4px solid #d9d9d9; border-bottom: 0; }
.caret.wide { border-left-width: 5px; border-right-width: 5px; border-top-width: 5px; }
.caret-up { border-bottom: 4px solid #777; border-top: 0; }
.caret-right { border-left: 5px solid #d9d9d9; border-right: 0; border-top-width: 5px; border-bottom-width: 5px; }

/* title bar */
.titlebar {
  display: flex;
  flex: none;
  height: 34px;
  padding-bottom: 8px;
  align-items: center;
}
.quick { display: flex; align-items: center; gap: 10px; }
.quick .drop { width: 6px; }
.quick .dim { opacity: .6; }
.share { gap: 6px; color: #9ad0f7; }
.titlebar h1 {
  flex: 1;
  display: flex;
  justify-content: center;
  gap: 18px;
  margin: 0;
  padding-top: 4px;
  font-size: 14px;
  font-weight: 400;
  color: #fff;
}
.info { display: flex; align-items: center; }
.keyword {
  width: 223px;
  height: 26px;
  margin: 0 6px;
  padding-left: 3px;
  background: #454e61;
  font-style: italic;
  font-size: 13px;
}
.keyword::placeholder { color: #b4bac5; opacity: 1; }
.user { margin-left: 9px; gap: 7px; color: #fff; width: 139px; }
.user .caret { margin-left: auto; }
.cart { margin-left: 15px; }
.apps { margin-left: 10px; gap: 7px; }
.help { margin-left: 13px; padding-left: 11px; gap: 10px; border-left: 1px solid #4a505a; }
.window { display: flex; gap: 15px; margin: 0 5px 0 87px; }

/* ribbon tabs */
.tabs {
  display: flex;
  flex: none;
  height: 25px;
  padding-left: 4px;
  color: #a9adb4;
}
.tabs button { padding: 0 12px; }
.tabs .active { background: #3b4453; color: #f2f2f2; }
.tabs .context { background: #126a99; border: 1px solid #2a90c4; color: #f2f2f2; }
.tabs .fold { padding: 0 27px; gap: 5px; }
.fold span { display: flex; justify-content: center; align-items: center; width: 19px; height: 9px; background: #f2f2f2; }

/* ribbon */
.ribbon {
  display: flex;
  flex: none;
  height: 124px;
  background: #3b4453;
}
.panel {
  display: flex;
  flex-direction: column;
  justify-content: space-between;
  border-right: 1px solid #222933;
}
.panel h2 {
  display: flex;
  justify-content: center;
  align-items: center;
  gap: 8px;
  position: relative;
  margin: 0 0 1px;
  font-size: 14px;
  font-weight: 400;
}
.launcher { position: absolute; right: 6px; top: 6px; }
.p-block { width: 141px; }
.p-def { width: 268px; padding-left: 2px; }
.p-ref { width: 353px; }
.p-ref h2 { padding-right: 16px; }
.p-import { width: 336px; padding-left: 4px; }
.p-data { width: 184px; }
.p-link { width: 246px; }
.p-loc { width: 86px; border: none; }
.tools { display: flex; }
.p-loc .tools { justify-content: center; }
.big {
  flex-direction: column;
  position: relative;
  width: 54px;
  padding-top: 8px;
  text-align: center;
  justify-content: flex-start;
}
.big span { margin-top: 5px; }
.big .caret { margin-top: 3px; }
.big .side { position: absolute; right: 2px; top: 72px; margin: 0; }
.big.low { padding-top: 9px; }
.big.low span { margin-top: 6px; }
.big.w80 { width: 80px; }
.big.w72 { width: 72px; }
.big.w70 { width: 70px; }
.big.w52 { width: 52px; }
.big.w48 { width: 48px; }
.big.w46 { width: 46px; }
.rows {
  display: flex;
  flex-direction: column;
  gap: 11px;
  padding: 11px 0 0 2px;
}
.rows button { gap: 7px; height: 20px; }
.r-import { width: 182px; padding-left: 12px; }
.divider { width: 1px; height: 92px; margin: 5px 0 0 6px; background: #222933; }

/* drawing tabs */
.files, .layouts {
  display: flex;
  flex: none;
  align-items: center;
  padding-left: 14px;
}
.files { height: 38px; border-bottom: 4px solid #3b4453; padding-top: 3px; }
.slash { width: 1px; height: 20px; background: #5a616b; transform: skewX(-25deg); }
.f-start { margin-left: 15px; width: 40px; }
.current {
  display: flex;
  align-items: center;
  justify-content: space-between;
  width: 202px;
  height: 31px;
  padding: 0 14px 0 21px;
  background: #3b4453;
  clip-path: polygon(12px 0, 100% 0, calc(100% - 12px) 100%, 0 100%);
  color: #fff;
  font-weight: 700;
}
.f-draw { width: 108px; padding-left: 10px; }
.f-gaio { width: 256px; padding-left: 15px; }
.plus {
  width: 16px; height: 16px;
  margin: 0 17px;
  background:
    linear-gradient(#d9dbde, #d9dbde) center / 16px 3px no-repeat,
    linear-gradient(#d9dbde, #d9dbde) center / 3px 16px no-repeat;
}

/* drawing area */
.canvas {
  position: relative;
  flex: 1;
  display: flex;
  justify-content: center;
  align-items: flex-end;
  background: #8a8a8a;
  overflow: hidden;
}
.paper {
  position: absolute;
  left: 529px; top: 0;
  width: 815px; height: 572px;
  padding: 4px 7px 8px 8px;
  background: #fff;
  border: 1px solid #555;
  border-top: none;
  box-shadow: 1px 2px 2px #666;
}
.viewport { height: 100%; border: 3px solid #222; border-top-width: 2px; }
.mdi { position: absolute; top: 10px; right: 10px; display: flex; gap: 9px; }
.navbar {
  position: absolute;
  top: 31px; right: 2px;
  border: 2px solid #6f6f6f;
  border-radius: 5px;
  background: #a0a0a0;
  width: 43px;
  height: 162px;
  overflow: hidden;
}
.navbar button { justify-content: center; width: 100%; }
.navbar .wheel { border-top: 1px solid #8f8f8f; border-bottom: 1px solid #8f8f8f; }
.crosshair { position: absolute; left: 1534px; top: 356px; }
.ucs { position: absolute; left: 13px; bottom: 12px; }

/* command line */
.command {
  display: flex;
  align-items: center;
  width: 1138px;
  height: 34px;
  padding: 1px;
  background: #474d58;
  border-radius: 4px;
}
.grip {
  width: 8px; height: 22px;
  margin-left: 5px;
  background: radial-gradient(circle, #d0d0d0 1px, transparent 2px) 0 0 / 4px 4px;
}
.c-close { margin-left: 6px; }
.c-wrench { margin: 0 6px 0 15px; }
.entry {
  display: flex;
  flex: 1;
  align-items: center;
  height: 32px;
  padding: 0 5px;
  background: #dcdcdc;
  border-radius: 3px;
}
.entry .caret { border-top-color: #777; margin: 0 8px 0 2px; }
.entry input {
  flex: 1;
  font-family: "DejaVu Sans Mono", monospace;
  font-style: italic;
  font-size: 15px;
}
.entry input::placeholder { color: #777; opacity: 1; }
.entry .caret-up { border-left-width: 5px; border-right-width: 5px; border-bottom-width: 5px; }

/* layout tabs */
.layouts { height: 42px; border-top: 6px solid #3b4453; padding-bottom: 6px; }
.l-model { margin-left: 16px; width: 53px; }
.l-active {
  justify-content: center;
  width: 99px;
  height: 30px;
  background: #3b4453;
  clip-path: polygon(11px 0, 100% 0, calc(100% - 11px) 100%, 0 100%);
  color: #fff;
  font-weight: 700;
}
.l-two { width: 76px; padding-left: 9px; }

/* status bar */
.status {
  display: flex;
  flex: none;
  gap: 3px;
  height: 32px;
  padding: 0 0 2px 1px;
}
.cell { display: flex; align-items: center; background: #3b4453; }
.cell button { justify-content: center; width: 30px; height: 28px; }
.cell .on { width: 28px; margin: 0 1px; background: #6290c8; }
.cell .drop { width: 20px; }
.cell.tight { margin-left: -2px; }
.cell.grow { flex: 1; }
.cell.paper-space { margin-left: 2px; }
.paper-space button { width: 52px; color: #fff; }
.cell .perf { width: 34px; }
.cell.last { padding-right: 1px; }

/* taskbar */
.taskbar {
  display: flex;
  flex: none;
  align-items: center;
  height: 60px;
  border-top: 1px solid #4b4346;
  background: linear-gradient(90deg, #33231f, #32241f 40%, #3d1b1e 62%, #3d1c1f 75%, #302321 84%, #2e2422);
  color: #fff;
}
.widget { width: 300px; padding: 0 0 6px 28px; }
.apps-row { display: flex; align-items: center; }
.apps-row button { position: relative; justify-content: center; width: 55px; height: 50px; }
.search {
  display: flex;
  align-items: center;
  width: 276px;
  height: 40px;
  margin: 0 1px 0 4px;
  padding: 0 8px 0 14px;
  border: 1px solid #635450;
  border-radius: 20px;
  background: linear-gradient(90deg, #4a3d39, #4c403c 60%, #3b302c);
}
.search input { flex: 1; margin-left: 11px; font-size: 16px; }
.search input::placeholder { color: #d3cdcb; opacity: 1; }
.run::after {
  content: "";
  position: absolute;
  bottom: 1px;
  left: 23px;
  width: 8px; height: 4px;
  border-radius: 2px;
  background: #a99c9b;
}
.group { background: #4a2a2c; border: 1px solid #4e3335; border-radius: 5px; background-clip: content-box; }
.group.pink { background: #5e2f36; }
.group.pink::after { background: #ff8f9c; }
.group.now::after { left: 17px; width: 20px; background: #4cb8f5; }
.tray { display: flex; align-items: center; margin-left: auto; padding-right: 24px; }
.tray button { margin-left: 18px; }
.tray .sync { margin-left: 22px; }
.tray .lang { text-align: center; margin-left: 23px; }
.tray .net { gap: 9px; margin-left: 22px; }
.tray .clock { text-align: right; margin-left: 20px; font-size: 15px; }

/* lettering inside the icons */
text { text-anchor: middle; font-family: "Open Sans", sans-serif; fill: #fff; }
.t-logo { font-size: 16px; font-weight: 800; }
.t-cad { font-size: 9px; font-weight: 800; }
.t-cad2 { font-size: 6px; font-weight: 800; }
.t-help { font-size: 15px; fill: #444; }
.t-var { font-size: 9px; font-style: italic; fill: #7cc4f8; }
.t-pdf { font-size: 7px; fill: #e5e5e5; }
.t-a { font-size: 12px; fill: #61b0ee; }
.t-a.gray { fill: #aaa; }
.t-bigA { font-size: 32px; }
.t-field { font-size: 21px; font-weight: 700; fill: #61b8f5; }
.t-upd { font-size: 11px; font-weight: 700; fill: #61b8f5; }
.t-2d { font-size: 11px; font-weight: 700; fill: #7d94aa; }
.t-badge { font-size: 14px; fill: #2a1416; }
.t-teams { font-size: 11px; font-weight: 700; }
.t-office { font-size: 14px; font-weight: 700; }
```
